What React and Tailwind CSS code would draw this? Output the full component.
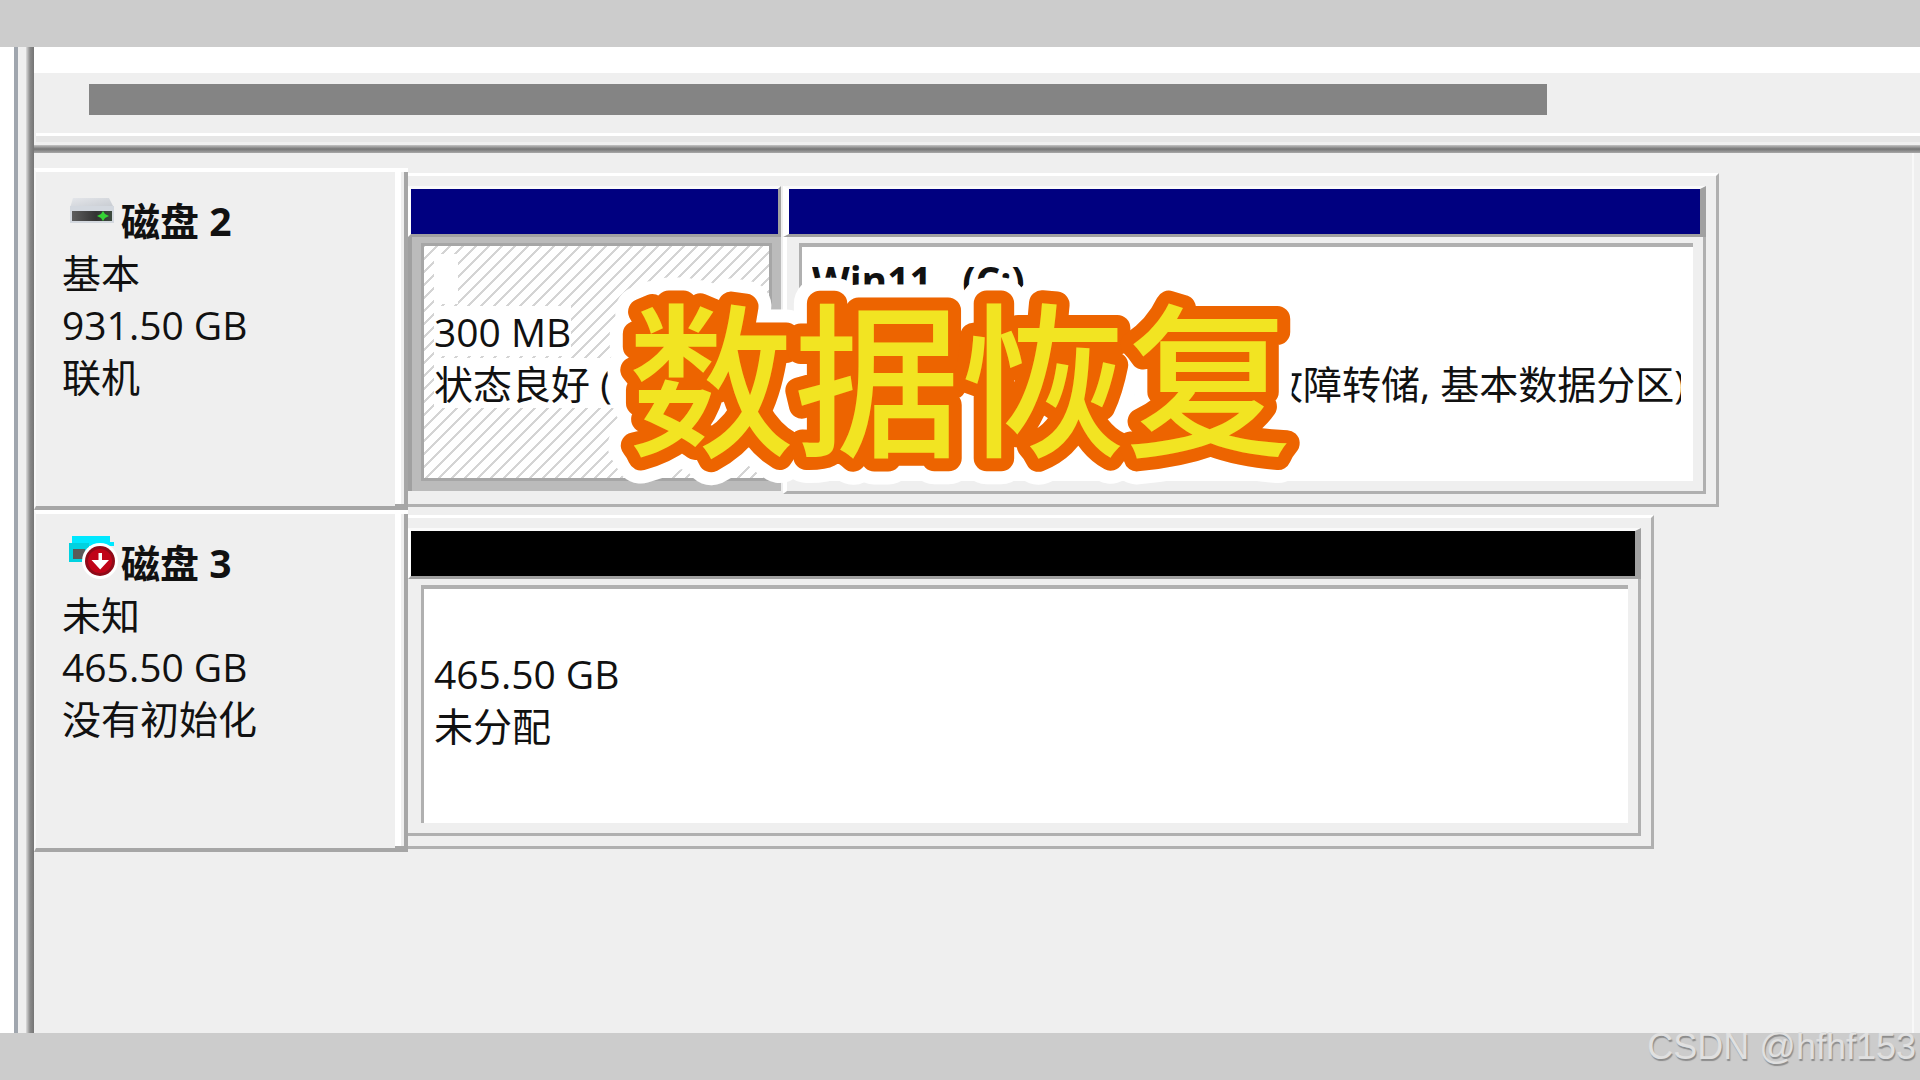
import React from "react";

const disks = [
  {
    id: 2,
    name: "磁盘 2",
    type: "基本",
    size: "931.50 GB",
    state: "联机",
    online: true,
    span: "mr-[193px]",
    partitions: [
      {
        id: "efi",
        size: "300 MB",
        status: "状态良好 (EFI 系统分区)",
        selected: true,
        width: "w-[373px]",
      },
      {
        id: "c",
        label: "Win11   (C:)",
        status: "状态良好 (启动, 页面文件, 故障转储, 基本数据分区)",
        width: "min-w-0 flex-1",
      },
    ],
  },
  {
    id: 3,
    name: "磁盘 3",
    type: "未知",
    size: "465.50 GB",
    state: "没有初始化",
    online: false,
    span: "mr-[258px]",
    partitions: [
      {
        id: "free",
        size: "465.50 GB",
        status: "未分配",
        unallocated: true,
        width: "min-w-0 flex-1",
      },
    ],
  },
];

function DriveIcon() {
  return (
    <svg width="44" height="44" viewBox="0 0 44 44" className="shrink-0 overflow-visible" aria-hidden="true">
      <defs>
        <linearGradient id="driveTop" x1="0" y1="0" x2="1" y2="1">
          <stop offset="0" stopColor="#e4e6ea" />
          <stop offset="1" stopColor="#c6cad0" />
        </linearGradient>
        <linearGradient id="driveFront" x1="0" y1="0" x2="1" y2="0">
          <stop offset="0" stopColor="#5e5e5e" />
          <stop offset="0.6" stopColor="#333333" />
          <stop offset="1" stopColor="#3d4a3d" />
        </linearGradient>
      </defs>
      <path d="M4 3H40L45 13H1Z" fill="url(#driveTop)" />
      <rect x="1" y="11" width="44" height="17" fill="#d3d8df" />
      <rect x="3" y="16" width="40" height="10" fill="url(#driveFront)" />
      <path d="M34 16l2 3 4 2-4 2-2 3-2-3-4-2 4-2z" fill="#35d435" />
    </svg>
  );
}

function DriveErrorIcon() {
  return (
    <svg width="44" height="44" viewBox="0 0 44 44" className="shrink-0 overflow-visible" aria-hidden="true">
      <path d="M3 -1H41V5H45V9H3Z" fill="#00e8ff" />
      <rect x="0" y="6" width="20" height="19" fill="#00d2e0" />
      <rect x="4" y="12" width="12" height="10" fill="#5a5a5a" />
      <circle cx="31" cy="24" r="18" fill="#ffffff" />
      <circle cx="31" cy="24" r="15" fill="#8f0a18" />
      <circle cx="31" cy="24" r="12" fill="#c00418" />
      <path d="M29.500 16H33V23H40L31.200 32.500L22.500 23H29.500Z" fill="#ffffff" />
    </svg>
  );
}

function PartitionText({ children, bold }) {
  return (
    <p className={`mb-[2px] h-[50px] w-fit min-w-[24px] whitespace-pre bg-white ${bold ? "font-bold" : ""}`}>
      {children}
    </p>
  );
}

function Partition({ part, first }) {
  return (
    <div className={`flex flex-col ${part.width}`}>
      <div
        className={`h-[51px] border-t-3 border-b-3 border-t-[#fafafa] border-b-[#a0a0a0] border-l-white border-r-[#a0a0a0] ${
          first ? "border-l-3" : "border-l-6"
        } ${part.selected ? "border-r-3" : "border-r-6"} ${part.unallocated ? "bg-black" : "bg-[#000080]"}`}
      />
      {part.selected ? (
        <div className="mb-[3px] flex-1 border-l-4 border-[#a0a0a0] bg-[#bbbbbb] pt-[6px] pr-[9px] pb-[10px] pl-[9px]">
          <div className="h-full overflow-hidden border-3 border-[#a6a6a6] bg-white bg-[linear-gradient(135deg,#d4d4d4_0_7%,#ffffff_7%_43%,#d4d4d4_43%_57%,#ffffff_57%_93%,#d4d4d4_93%)] bg-[size:13px_13px] pt-[8px] pl-[10px]">
            <PartitionText> </PartitionText>
            <PartitionText>{part.size}</PartitionText>
            <PartitionText>{part.status}</PartitionText>
          </div>
        </div>
      ) : (
        <div
          className={`flex-1 border-r-3 border-b-3 border-r-[#b0b0b0] border-b-[#b0b0b0] pt-[6px] pr-[10px] pb-[10px] ${
            first ? "pl-[13px]" : "border-l-4 border-l-white pl-[12px]"
          }`}
        >
          <div className="h-full border-t-4 border-l-3 border-[#b0b0b0] bg-white pt-[7px] pr-[12px] pl-[10px]">
            <div className="overflow-hidden">
              <PartitionText bold>{part.label}</PartitionText>
              <PartitionText>{part.size}</PartitionText>
              <PartitionText>{part.status}</PartitionText>
            </div>
          </div>
        </div>
      )}
    </div>
  );
}

function DiskRow({ disk }) {
  return (
    <section className="flex h-[342px]">
      <div className="flex w-[374px] shrink-0">
        <div className="flex-1 border-t-4 border-b-4 border-l-2 border-t-white border-b-[#a6a6a6] border-l-[#f8f8f8] pt-[23px] pl-[26px]">
          <h2 className="flex gap-[8px] pl-[7px] font-bold">
            {disk.online ? <DriveIcon /> : <DriveErrorIcon />}
            {disk.name}
          </h2>
          <p>{disk.type}</p>
          <p>{disk.size}</p>
          <p>{disk.state}</p>
        </div>
        {/* Raised right edge of the label */}
        <div className="flex w-[13px] flex-col">
          <div className="h-[4px] bg-white" />
          <div className="flex flex-1 justify-between">
            <div className="w-[6px] bg-white" />
            <div className="w-[4px] bg-[#a6a6a6]" />
          </div>
          <div className="h-[6px] bg-[#a6a6a6]" />
        </div>
      </div>

      <div
        className={`mt-[5px] mb-[3px] flex min-w-0 flex-1 gap-[2px] border-t-3 border-r-3 border-b-3 border-t-white border-r-[#b0b0b0] border-b-[#b0b0b0] pt-[10px] pr-[10px] pb-[10px] ${disk.span}`}
      >
        {disk.partitions.map((part, i) => (
          <Partition key={part.id} part={part} first={i === 0} />
        ))}
      </div>
    </section>
  );
}

function Headline() {
  return (
    <h1 className="pointer-events-none absolute inset-x-0 top-[280px] flex justify-center">
      <svg
        width="720"
        height="220"
        viewBox="0 0 720 220"
        className="overflow-visible font-['Noto_Sans_CJK_SC',sans-serif] text-[166px] font-medium"
        textAnchor="middle"
        strokeLinejoin="round"
      >
        <text x="360" y="164" fill="#ffffff" stroke="#ffffff" strokeWidth="52" aria-hidden="true">数据恢复</text>
        <text x="360" y="164" fill="#f2e422" stroke="#ed6400" strokeWidth="26" paintOrder="stroke">数据恢复</text>
      </svg>
    </h1>
  );
}

export default function App() {
  return (
    <div className="relative flex min-h-screen flex-col bg-[#cccccc] font-['Open_Sans','Noto_Sans_CJK_SC',sans-serif] text-[39px] leading-[52px] text-[#111111]">
      <div className="h-[47px]" />

      <main className="flex flex-1 bg-[#efefef]">
        {/* Window edge */}
        <div className="w-[14px] bg-white" />
        <div className="w-[4px] bg-[#a0a6ae]" />
        <div className="w-[8px]" />
        <div className="w-[8px] bg-linear-to-r from-[#dddddd] via-[#8a8a8a] to-[#757575]" />

        <div className="flex min-w-0 flex-1 flex-col">
          {/* Volume list bottom with its scrollbar */}
          <div className="h-[26px] bg-white" />
          <div className="pt-[11px] pr-[373px] pb-[18px] pl-[55px]">
            <div className="h-[31px] bg-[#848484]" />
          </div>
          <div className="ml-[2px] h-[9px] border-t-3 border-white bg-[#e6e6e6]" />
          <div className="h-[3px]" />
          <div className="h-[8px] bg-linear-to-b from-[#c4c4c4] via-[#757575] to-[#a8a8a8]" />

          <div className="mr-[6px] flex-1 border-r-2 border-[#f8f8f8] pt-[15px]">
            {disks.map((disk) => (
              <DiskRow key={disk.id} disk={disk} />
            ))}
          </div>
        </div>
      </main>

      <footer className="flex h-[47px] justify-end pr-[4px] font-['Liberation_Sans',sans-serif] text-[36px] leading-[28px] text-[#e0e0e0] [text-shadow:1px_2px_1px_#8c8c8c]">
        CSDN @hfhf153
      </footer>

      <Headline />
    </div>
  );
}
